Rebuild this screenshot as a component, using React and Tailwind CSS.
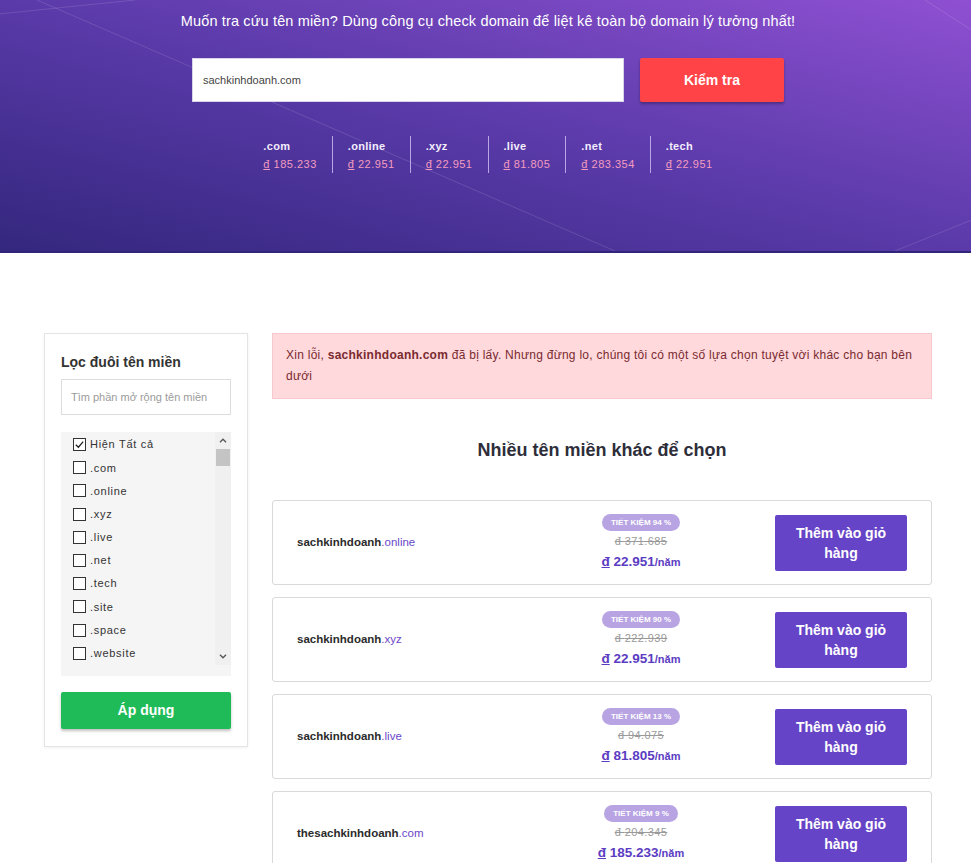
import React from 'react';

const tlds = [
  { name: '.com', price: '185.233' },
  { name: '.online', price: '22.951' },
  { name: '.xyz', price: '22.951' },
  { name: '.live', price: '81.805' },
  { name: '.net', price: '283.354' },
  { name: '.tech', price: '22.951' },
];

const filters = ['Hiện Tất cả', '.com', '.online', '.xyz', '.live', '.net', '.tech', '.site', '.space', '.website'];

const results = [
  { base: 'sachkinhdoanh', ext: '.online', save: 94, old: '371.685', price: '22.951' },
  { base: 'sachkinhdoanh', ext: '.xyz', save: 90, old: '222.939', price: '22.951' },
  { base: 'sachkinhdoanh', ext: '.live', save: 13, old: '94.075', price: '81.805' },
  { base: 'thesachkinhdoanh', ext: '.com', save: 9, old: '204.345', price: '185.233' },
];

const Hero = () => (
  <div className="relative h-[253px] overflow-hidden border-b-2 border-[#30257a] bg-linear-to-tr from-[#34277e] via-[#5a3aa9] to-[#8f50d2]">
    {/* đường chéo trang trí */}
    <svg className="absolute inset-0 h-full w-full" viewBox="0 0 971 253" preserveAspectRatio="none">
      <g stroke="#ffffff" strokeOpacity="0.13" strokeWidth="1" fill="none">
        <line x1="37" y1="0" x2="615" y2="253" />
        <line x1="0" y1="14" x2="135" y2="0" />
        <line x1="895" y1="253" x2="971" y2="222" />
        <line x1="925" y1="0" x2="971" y2="30" />
      </g>
    </svg>
    <div className="relative flex flex-col items-center pt-[11px] pl-[5px]">
      <p className="text-[14.5px] leading-[20px] tracking-[0.15px] text-white">
        Muốn tra cứu tên miền? Dùng công cụ check domain để liệt kê toàn bộ domain lý tưởng nhất!
      </p>
      <div className="mt-[27px] flex gap-4">
        <div className="flex h-[44px] w-[432px] items-center border border-[#d9d4ea] bg-white px-[10px] text-[11px] text-[#444]">
          sachkinhdoanh.com
        </div>
        <button className="h-[44px] w-[144px] rounded-[2px] bg-[#ff4347] text-[14px] font-bold text-white shadow-[0_2px_3px_rgba(0,0,0,0.3)]">
          Kiểm tra
        </button>
      </div>
      <div className="mt-[34px] flex">
        {tlds.map((t, i) => (
          <div
            key={t.name}
            className={`flex h-[37px] flex-col justify-center px-[15px] ${i > 0 ? 'border-l border-[#b9a6e6]' : ''}`}
          >
            <span className="text-[11px] leading-[18px] font-bold tracking-[0.3px] text-[#f3eefc]">{t.name}</span>
            <span className="text-[11px] leading-[18px] tracking-[0.5px] text-[#f39cc0]">
              <span className="underline">đ</span> {t.price}
            </span>
          </div>
        ))}
      </div>
    </div>
  </div>
);

const Checkbox = ({ checked }) => (
  <span className="flex h-[13px] w-[13px] shrink-0 items-center justify-center border border-[#333] bg-white">
    {checked && (
      <svg viewBox="0 0 12 12" className="h-[11px] w-[11px]">
        <path d="M2 6.2 L4.8 9 L10 2.8" stroke="#222" strokeWidth="1.4" fill="none" />
      </svg>
    )}
  </span>
);

const Sidebar = () => (
  <div className="w-[204px] shrink-0 self-start border border-[#e4e4e4] bg-white px-[16px] pt-[18px] pb-[17px] shadow-[0_1px_3px_rgba(0,0,0,0.06)]">
    <h3 className="text-[14px] leading-[20px] font-bold text-[#333]">Lọc đuôi tên miền</h3>
    <div className="mt-[7px] flex h-[36px] items-center border border-[#dcdcdc] px-[9px] text-[11px] text-[#9b9b9b]">
      Tìm phần mở rộng tên miền
    </div>
    <div className="mt-[17px] bg-[#f5f5f5] pb-[11px]">
      <div className="flex h-[233px]">
        <ul className="flex-1 overflow-hidden pt-[1px] pl-[12px]">
          {filters.map((f, i) => (
            <li key={f} className="flex h-[23.2px] items-center gap-[4px] text-[11px] tracking-[0.7px] text-[#333]">
              <Checkbox checked={i === 0} />
              <span>{f}</span>
            </li>
          ))}
        </ul>
        {/* thanh cuộn */}
        <div className="flex w-[16px] flex-col bg-[#f0f0f0]">
          <div className="flex h-[17px] items-center justify-center">
            <svg viewBox="0 0 8 5" className="h-[5px] w-[8px]"><path d="M1 4.2 L4 1.2 L7 4.2" stroke="#555" strokeWidth="1.3" fill="none" /></svg>
          </div>
          <div className="mx-[1px] h-[17px] bg-[#c4c4c4]" />
          <div className="flex-1" />
          <div className="flex h-[17px] items-center justify-center">
            <svg viewBox="0 0 8 5" className="h-[5px] w-[8px]"><path d="M1 0.8 L4 3.8 L7 0.8" stroke="#555" strokeWidth="1.3" fill="none" /></svg>
          </div>
        </div>
      </div>
    </div>
    <button className="mt-[16px] h-[37px] w-full rounded-[2px] bg-[#1fbb58] text-[14px] font-bold text-white shadow-[0_2px_3px_rgba(0,0,0,0.25)]">
      Áp dụng
    </button>
  </div>
);

const ResultCard = ({ r }) => (
  <div className="flex h-[85px] items-center rounded-[3px] border border-[#d9d9d9] bg-white pr-[24px] pl-[24px]">
    <div className="flex-1 text-[11.5px] font-semibold text-[#2b2b2b]">
      {r.base}
      <span className="font-normal text-[#6a47c8]">{r.ext}</span>
    </div>
    <div className="flex w-[150px] flex-col items-center">
      <span className="rounded-full bg-[#b8a4e3] px-[9px] text-[8px] leading-[17px] font-bold text-white">
        TIẾT KIỆM {r.save} %
      </span>
      <span className="mt-[2px] text-[11px] leading-[16px] tracking-[0.4px] text-[#9a9a9a] line-through">đ {r.old}</span>
      <span className="mt-[2px] leading-[20px] font-bold text-[#5b3cc2]">
        <span className="text-[13.5px]"><span className="underline">đ</span> {r.price}</span>
        <span className="text-[11px] font-semibold">/năm</span>
      </span>
    </div>
    <button className="ml-[59px] h-[56px] w-[132px] rounded-[2px] bg-[#6644c7] px-[16px] text-[14px] leading-[20px] font-bold text-white">
      Thêm vào giỏ hàng
    </button>
  </div>
);

export default function App() {
  return (
    <div className="min-h-screen bg-white font-['Liberation_Sans',Arial,sans-serif]">
      <Hero />
      <div className="flex gap-[24px] pt-[80px] pr-[39px] pl-[44px]">
        <Sidebar />
        <div className="flex-1">
          <p className="border border-[#f7c9cd] bg-[#ffd9dc] py-[11px] pr-[10px] pl-[13px] text-[12px] leading-[21px] tracking-[0.26px] text-[#7a2a30]">
            Xin lỗi, <b>sachkinhdoanh.com</b> đã bị lấy. Nhưng đừng lo, chúng tôi có một số lựa chọn tuyệt vời khác cho bạn bên dưới
          </p>
          <h2 className="mt-[39px] mb-[38px] text-center text-[18px] leading-[24px] font-bold text-[#2e2e3a]">
            Nhiều tên miền khác để chọn
          </h2>
          <div className="flex flex-col gap-[12px] pb-[40px]">
            {results.map((r) => (
              <ResultCard key={r.base + r.ext} r={r} />
            ))}
          </div>
        </div>
      </div>
    </div>
  );
}
